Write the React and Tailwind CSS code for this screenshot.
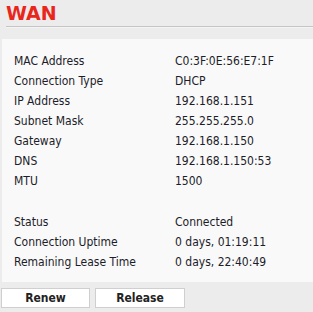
import React from 'react';

const rowsTop = [
  ['MAC Address', 'C0:3F:0E:56:E7:1F'],
  ['Connection Type', 'DHCP'],
  ['IP Address', '192.168.1.151'],
  ['Subnet Mask', '255.255.255.0'],
  ['Gateway', '192.168.1.150'],
  ['DNS', '192.168.1.150:53'],
  ['MTU', '1500'],
];

const rowsBottom = [
  ['Status', 'Connected'],
  ['Connection Uptime', '0 days, 01:19:11'],
  ['Remaining Lease Time', '0 days, 22:40:49'],
];

function Row({ label, value }) {
  return (
    <div className="flex h-5 items-center">
      <div className="w-[161px] shrink-0">{label}</div>
      <div>{value}</div>
    </div>
  );
}

export default function App() {
  return (
    <div className="w-[313px] h-[312px] bg-[#ececec] overflow-hidden text-[12px] text-[#1c1c2a] font-['DejaVu_Sans_Condensed','DejaVu_Sans',sans-serif]">
      {/* header */}
      <div className="pl-[6px] pt-[3px] h-[26px]">
        <h1 className="text-[19px] leading-[20px] font-bold text-[#e8261c] font-['DejaVu_Sans',sans-serif]">WAN</h1>
      </div>
      <div className="ml-[6px] h-px bg-[#c4c4c4]" />
      <div className="ml-[6px] h-px bg-[#f4f4f4]" />

      {/* info panel */}
      <div className="ml-[2px] mt-[11px] h-[243px] bg-[#f9f9f9] pl-[12px] pt-[12px]">
        {rowsTop.map(([l, v]) => (
          <Row key={l} label={l} value={v} />
        ))}
        <div className="h-[21px]" />
        {rowsBottom.map(([l, v]) => (
          <Row key={l} label={l} value={v} />
        ))}
      </div>

      {/* actions */}
      <div className="flex gap-[5px] ml-[1px] mt-[6px]">
        <button className="w-[89px] h-[20px] bg-white border border-[#cfcfcf] font-bold text-[#222]">Renew</button>
        <button className="w-[90px] h-[20px] bg-white border border-[#cfcfcf] font-bold text-[#222]">Release</button>
      </div>
    </div>
  );
}
